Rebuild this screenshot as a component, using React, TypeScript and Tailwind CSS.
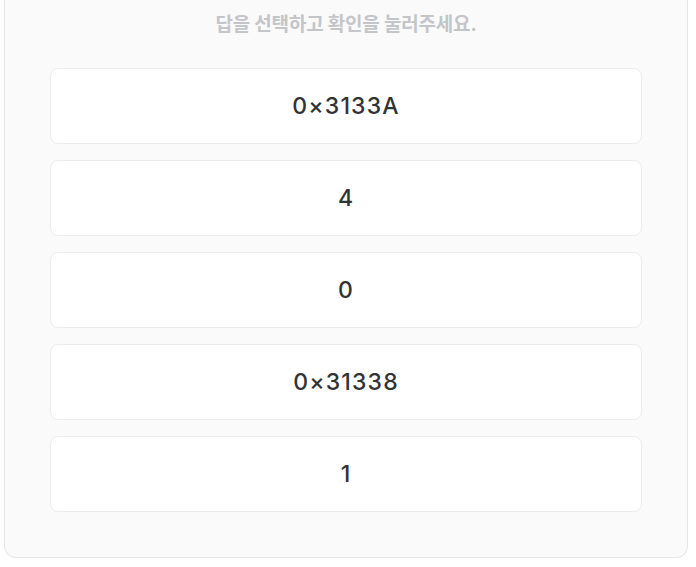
import React, { useState } from "react";

const options = ["0×3133A", "4", "0", "0×31338", "1"];

const App: React.FC = () => {
  const [selected, setSelected] = useState<number | null>(null);

  return (
    <div
      className="min-h-[567px] bg-white pl-1 pr-2"
      style={{ fontFamily: "Inter, 'Noto Sans CJK KR', sans-serif" }}
    >
      <div className="rounded-b-xl border-x border-b border-[#e6e6e8] bg-[#fafafa] px-[45px] pt-[12px] pb-[45px]">
        <p className="text-center text-[19px] leading-[26px] font-bold tracking-[-0.01em] text-[#c4c5c9]">
          답을 선택하고 확인을 눌러주세요.
        </p>
        <div className="mt-[30px] flex flex-col gap-4">
          {options.map((opt, i) => (
            <button
              key={i}
              onClick={() => setSelected(i)}
              className={
                selected === i
                  ? "flex h-[76px] items-center justify-center rounded-lg border border-[#3b82f6] bg-white text-[23px] font-medium tracking-[0.05em] text-[#333333]"
                  : "flex h-[76px] items-center justify-center rounded-lg border border-[#ececee] bg-white text-[23px] font-medium tracking-[0.05em] text-[#333333]"
              }
            >
              {opt}
            </button>
          ))}
        </div>
      </div>
    </div>
  );
};

export default App;
